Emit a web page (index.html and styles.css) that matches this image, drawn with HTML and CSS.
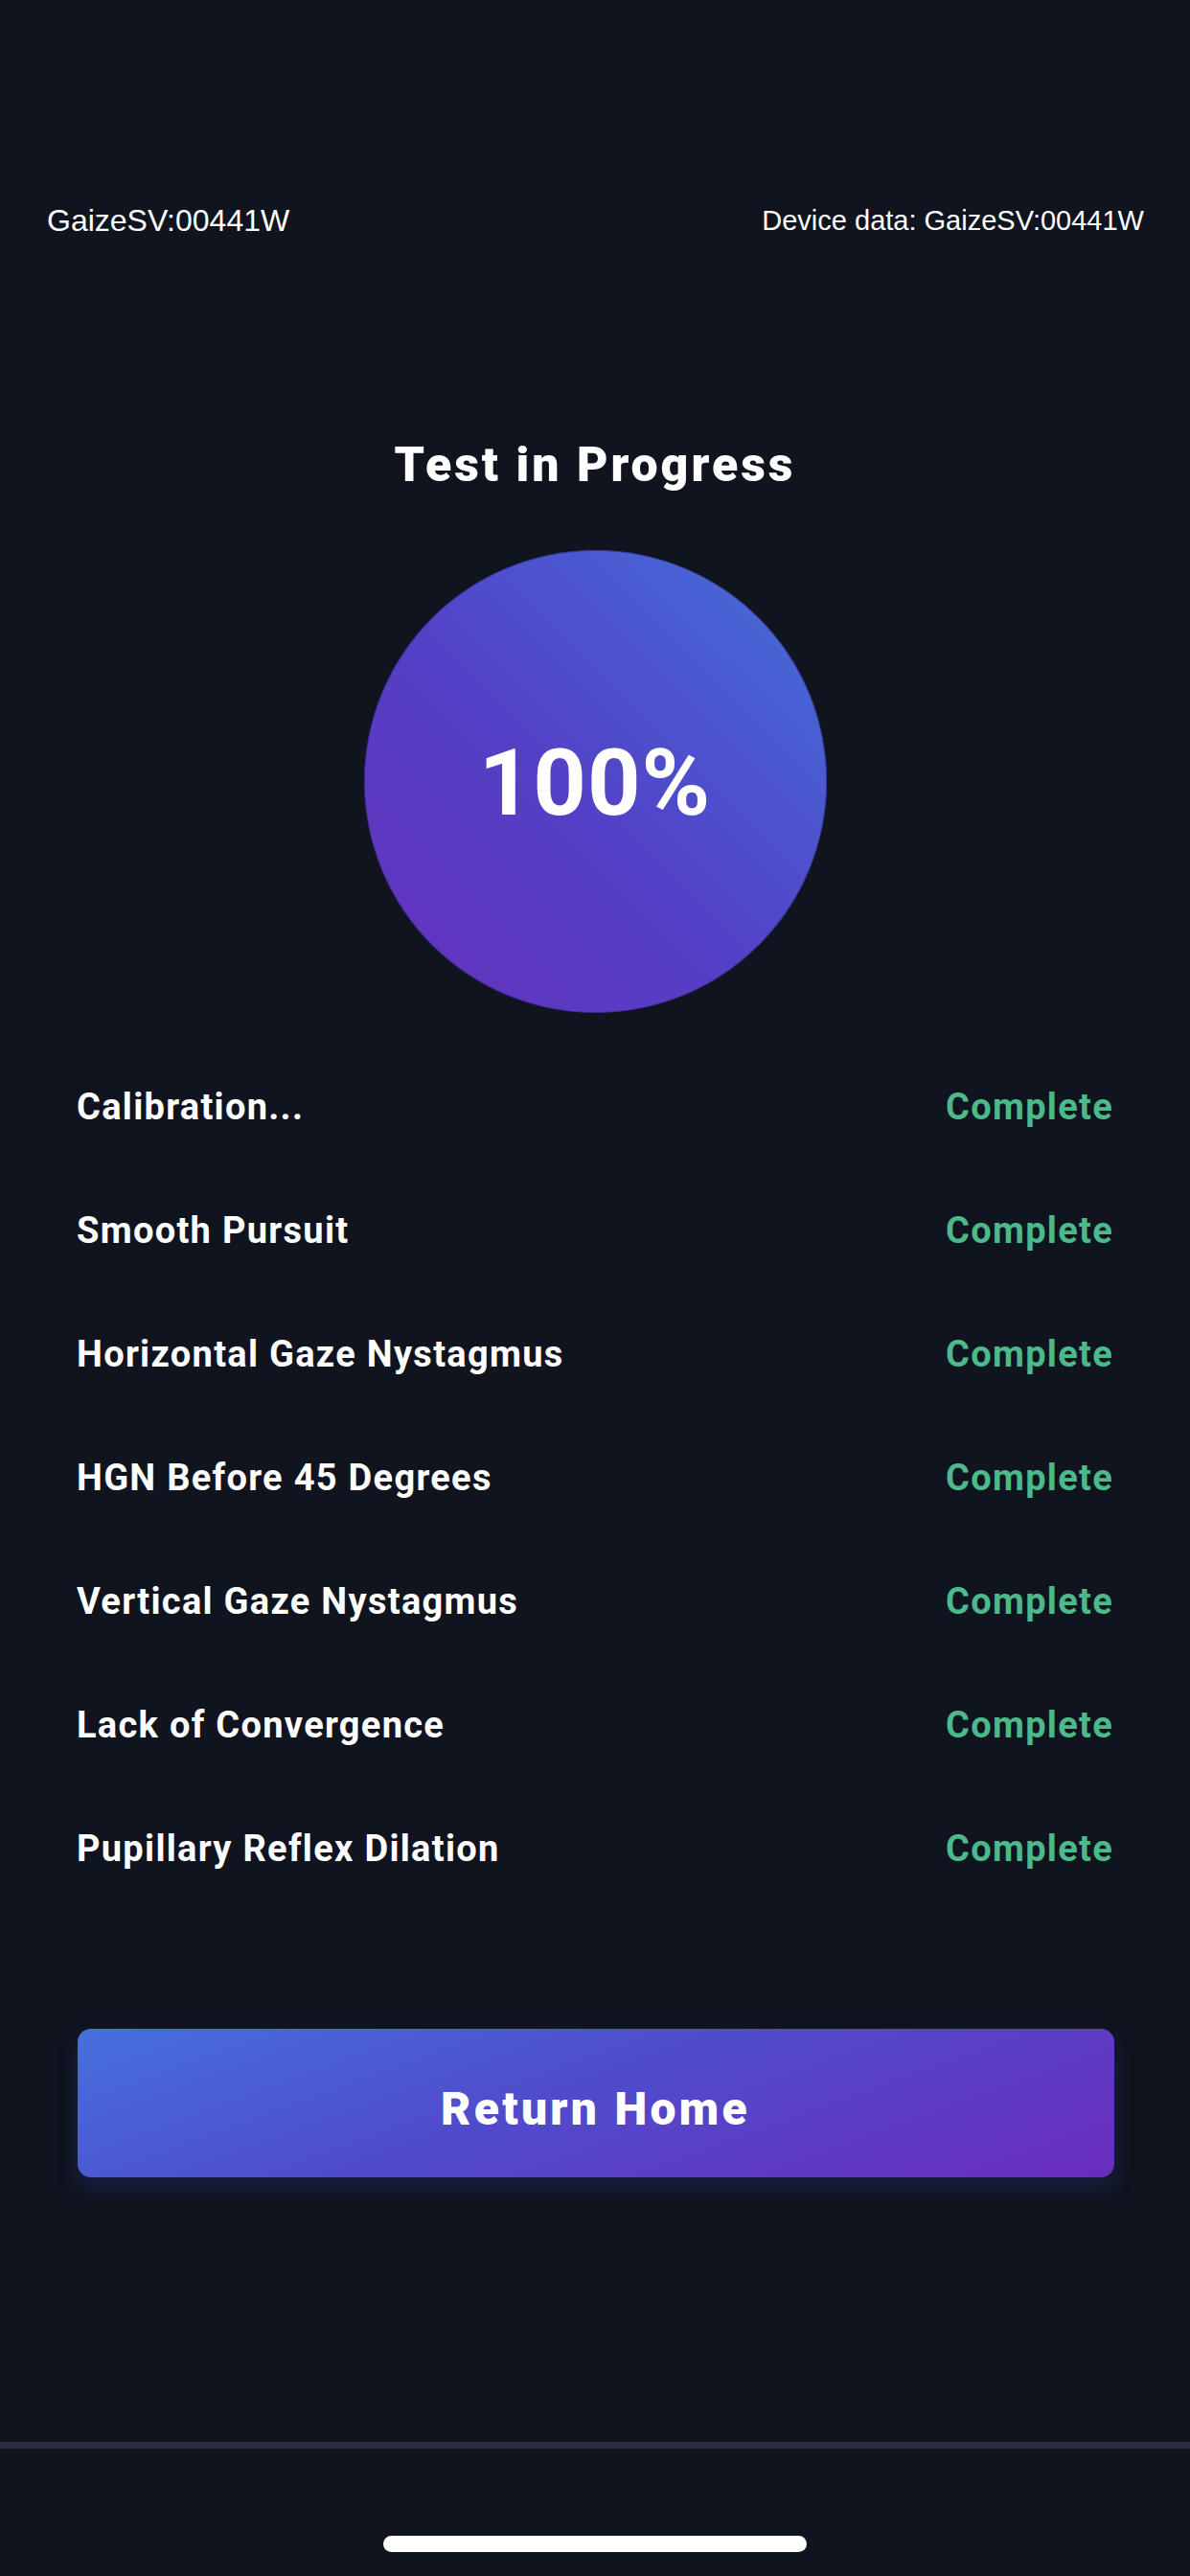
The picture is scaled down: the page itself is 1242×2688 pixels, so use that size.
FILE: index.html
```html
<!DOCTYPE html>
<html lang="en">
<head>
<meta charset="utf-8">
<title>Test in Progress</title>
<link rel="stylesheet" href="styles.css">
</head>
<body>
<div class="screen">
  <header class="topbar">
    <span class="device-id">GaizeSV:00441W</span>
    <span class="device-data">Device data: GaizeSV:00441W</span>
  </header>
  <main class="content">
    <h1 class="title">Test in Progress</h1>
    <div class="progress-circle"><span class="progress-value">100%</span></div>
    <ul class="steps">
      <li class="step"><span class="step-name">Calibration...</span><span class="step-status">Complete</span></li>
      <li class="step"><span class="step-name">Smooth Pursuit</span><span class="step-status">Complete</span></li>
      <li class="step"><span class="step-name">Horizontal Gaze Nystagmus</span><span class="step-status">Complete</span></li>
      <li class="step"><span class="step-name">HGN Before 45 Degrees</span><span class="step-status">Complete</span></li>
      <li class="step"><span class="step-name">Vertical Gaze Nystagmus</span><span class="step-status">Complete</span></li>
      <li class="step"><span class="step-name">Lack of Convergence</span><span class="step-status">Complete</span></li>
      <li class="step"><span class="step-name">Pupillary Reflex Dilation</span><span class="step-status">Complete</span></li>
    </ul>
    <button class="btn-home" type="button">Return Home</button>
  </main>
  <footer class="bottom">
    <div class="divider"></div>
    <div class="home-indicator"></div>
  </footer>
</div>
</body>
</html>
```

FILE: styles.css
```css
* { box-sizing: border-box; }
html, body {
  margin: 0;
  padding: 0;
  background: #10141f;
}
.screen {
  width: 1242px;
  height: 2688px;
  background: #10141f;
  display: flex;
  flex-direction: column;
  overflow: hidden;
  font-family: Roboto, "Noto Sans", sans-serif;
  color: #ffffff;
}
.topbar {
  display: flex;
  justify-content: space-between;
  align-items: center;
  padding: 211px 48px 0 49px;
  height: 249px;
  font-family: "Liberation Sans", Arial, sans-serif;
  line-height: 38px;
  color: #ffffff;
}
.device-id {
  font-size: 32px;
}
.device-data {
  font-size: 29px;
}
.content {
  display: flex;
  flex-direction: column;
  align-items: center;
}
.title {
  margin: 206px 0 0;
  font-size: 50px;
  line-height: 60px;
  font-weight: 900;
  letter-spacing: 3px;
  text-align: center;
}
.progress-circle {
  margin-top: 59px;
  width: 483px;
  height: 483px;
  border-radius: 50%;
  background: linear-gradient(45deg, #6531bc 0%, #5340c6 45%, #4371da 100%);
  box-shadow: inset 0 0 0 1px rgba(40, 30, 110, 0.5);
  display: flex;
  align-items: center;
  justify-content: center;
}
.progress-value {
  font-size: 97px;
  font-weight: 700;
  line-height: 1;
  letter-spacing: 1px;
  margin-top: 4px;
}
.steps {
  list-style: none;
  margin: 33px 0 0;
  padding: 0 80px 0 80px;
  width: 100%;
}
.step {
  height: 129px;
  display: flex;
  align-items: center;
  justify-content: space-between;
  font-size: 38px;
  font-weight: 700;
  letter-spacing: 1.3px;
}
.step-status {
  color: #4cb98a;
}
.btn-home {
  margin-top: 124px;
  width: 1082px;
  height: 155px;
  border: none;
  border-radius: 14px;
  background: linear-gradient(160deg, #4670dc 0%, #4f4ccc 45%, #6a2cbc 100%);
  box-shadow: 0 12px 22px rgba(50, 70, 190, 0.22);
  color: #ffffff;
  font-family: Roboto, "Noto Sans", sans-serif;
  font-size: 48px;
  font-weight: 900;
  letter-spacing: 3.3px;
  padding: 12px 0 0;
  margin-left: 1px;
}
.bottom {
  margin-top: 276px;
  display: flex;
  flex-direction: column;
  align-items: center;
}
.divider {
  width: 100%;
  height: 7px;
  background: #282d42;
}
.home-indicator {
  margin-top: 91px;
  width: 442px;
  height: 17px;
  border-radius: 9px;
  background: #ffffff;
}
```
